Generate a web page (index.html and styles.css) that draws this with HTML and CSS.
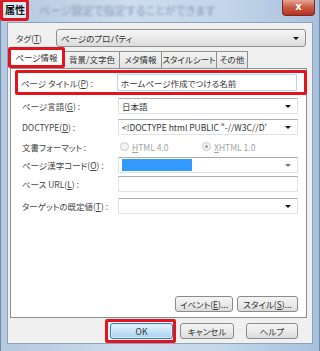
FILE: index.html
```html
<!DOCTYPE html>
<html lang="ja">
<head>
    <meta charset="UTF-8">
    <title>属性</title>
    <link rel="stylesheet" href="styles.css">
</head>
<body>
    <div class="win">
        <!-- title bar -->
        <div class="titlebar">
            <span class="cap">属性</span>
            <span class="glass">ページ設定で指定することができます</span>
            <span class="close">x</span>
        </div>

        <div class="client">
            <div class="tagrow">
                <span class="lbl">タグ(<u>T</u>)</span>
                <div class="combo btncombo"><span>ページのプロパティ</span><i class="arrow"></i></div>
            </div>

            <div class="tabs">
                <span class="tab active">ページ情報</span>
                <span class="tab w55">背景/文字色</span>
                <span class="tab w42">メタ情報</span>
                <span class="tab w55">スタイルシート</span>
                <span class="tab w31">その他</span>
            </div>

            <div class="panel">
                <div class="row mark">
                    <span class="lbl">ページ タイトル(<u>P</u>) :</span>
                    <div class="field edit"><span>ホームページ作成でつける名前</span></div>
                </div>
                <div class="row h21">
                    <span class="lbl">ページ言語(<u>G</u>) :</span>
                    <div class="field combo"><span>日本語</span><i class="arrow"></i></div>
                </div>
                <div class="row h21">
                    <span class="lbl">DOCTYPE(<u>D</u>) :</span>
                    <div class="field combo"><span class="clip">&lt;!DOCTYPE html PUBLIC "-//W3C//D'</span><i class="arrow"></i></div>
                </div>
                <div class="row h19">
                    <span class="lbl">文書フォーマット :</span>
                    <div class="radios">
                        <span class="radio"><i class="dot"></i><u>H</u>TML 4.0</span>
                        <span class="radio on"><i class="dot"></i><u>X</u>HTML 1.0</span>
                    </div>
                </div>
                <div class="row h17">
                    <span class="lbl">ページ漢字コード(<u>O</u>) :</span>
                    <div class="field combo"><span class="sel"></span><i class="arrow grey"></i></div>
                </div>
                <div class="row h22">
                    <span class="lbl">ベース URL(<u>L</u>) :</span>
                    <div class="field edit"></div>
                </div>
                <div class="row h22">
                    <span class="lbl">ターゲットの既定値(<u>T</u>) :</span>
                    <div class="field combo"><span></span><i class="arrow"></i></div>
                </div>

                <div class="panel-btns">
                    <span class="btn w58">イベント(<u>E</u>)...</span>
                    <span class="btn w61">スタイル(<u>S</u>)...</span>
                </div>
            </div>

            <div class="footer">
                <span class="okmark"><span class="btn default w63">OK</span></span>
                <span class="btn w54">キャンセル</span>
                <span class="btn w52">ヘルプ</span>
            </div>
        </div>
    </div>
</body>
</html>
```

FILE: styles.css
```css
/* Windows 7 style property dialog */
* {
    box-sizing: border-box;
}
body {
    margin: 0;
    width: 320px;
    height: 351px;
    overflow: hidden;
    font-family: "Noto Sans CJK JP", "Noto Sans", sans-serif;
    font-size: 8.5px;
    font-feature-settings: "palt";
    color: #444;
    background: #8aa4c2;
}
u {
    text-decoration: underline;
    text-underline-offset: 1px;
}
.win {
    height: 351px;
    display: flex;
    flex-direction: column;
    background: linear-gradient(90deg, #b4c8df, #cddcee 40%, #c3d6ea 70%, #a9c0dc);
    border-left: 1px solid #6f8aa8;
    border-right: 1px solid #6f8aa8;
}
.titlebar {
    height: 22px;
    flex: none;
    display: flex;
    align-items: flex-start;
}
.cap {
    margin-top: -1px;
    margin-left: -1px;
    border: 3px solid #e2151f;
    border-radius: 3px;
    padding: 0 1px 1px 2px;
    font-size: 10px;
    font-weight: bold;
    line-height: 15px;
    color: #111;
    background: #dce8f4;
}
.glass {
    margin: 2px 0 0 10px;
    font-size: 11px;
    color: #4e6a8a;
    opacity: .55;
    filter: blur(1px);
    white-space: nowrap;
}
.close {
    margin-left: auto;
    margin-right: 4px;
    width: 33px;
    height: 16px;
    border: 1px solid #7a2a25;
    border-top: none;
    border-radius: 0 0 4px 4px;
    background: linear-gradient(#e8a493, #c85a45 50%, #b7321f);
    color: #fff;
    font-family: "DejaVu Sans", sans-serif;
    font-size: 10px;
    font-weight: bold;
    text-align: center;
    line-height: 13px;
}
.client {
    margin: 0 6px;
    height: 322px;
    background: #f0f0f0;
    border: 1px solid #8da3bd;
    display: flex;
    flex-direction: column;
}
.tagrow {
    margin-top: 6px;
    height: 18px;
    display: flex;
    align-items: center;
    padding-left: 8px;
}
.tagrow .lbl {
    width: 40px;
}
.combo, .edit {
    position: relative;
    display: flex;
    align-items: center;
    background: #fff;
    border: 1px solid #dfe3e8;
    border-top-color: #abadb3;
    color: #333;
    padding-left: 3px;
    overflow: hidden;
    white-space: nowrap;
}
.btncombo {
    width: 250px;
    height: 18px;
    border: 1px solid #8e8f8f;
    border-radius: 3px;
    background: linear-gradient(#f6f6f6, #e9e9e9 50%, #dcdcdc);
    padding-left: 4px;
}
.arrow {
    position: absolute;
    right: 6px;
    top: 50%;
    margin-top: -1px;
    border-left: 3px solid transparent;
    border-right: 3px solid transparent;
    border-top: 3px solid #111;
}
.arrow.grey {
    border-top-color: #777;
}
.tabs {
    height: 21px;
    display: flex;
    align-items: flex-end;
}
.tab {
    height: 17px;
    border: 1px solid #8e8f8f;
    border-bottom: none;
    border-left: none;
    background: linear-gradient(#f3f3f3, #e3e3e3);
    text-align: center;
    line-height: 15px;
    white-space: nowrap;
    overflow: hidden;
    color: #333;
}
.tab.active {
    width: 57px;
    height: 21px;
    border: 3px solid #e2151f;
    border-radius: 2px;
    background: #fff;
    line-height: 14px;
    position: relative;
    z-index: 1;
}
.w55 { width: 55px; }
.w42 { width: 42px; }
.w31 { width: 31px; }
.panel {
    margin-left: 2px;
    width: 297px;
    height: 250px;
    background: #fff;
    border: 1px solid #8e8f8f;
    display: flex;
    flex-direction: column;
    padding-top: 1px;
}
.row {
    display: flex;
    align-items: center;
    padding-left: 11px;
}
.row .lbl {
    width: 96px;
    flex: none;
    white-space: nowrap;
    color: #444;
}
.row.mark {
    margin-left: 4px;
    width: 292px;
    height: 25px;
    border: 3px solid #e2151f;
    border-radius: 2px;
    padding-left: 3px;
}
.row.mark .field {
    border-color: #b7d5ef;
    height: 17px;
}
.h21 { height: 21px; }
.h19 { height: 19px; }
.h17 { height: 17px; }
.h22 { height: 22px; }
.field {
    width: 180px;
    height: 16px;
}
.sel {
    width: 70px;
    height: 12px;
    background: #3399ff;
}
.radios {
    display: flex;
    padding-left: 2px;
    color: #a3a3a3;
}
.radio {
    display: flex;
    align-items: center;
    width: 82px;
}
.dot {
    width: 9px;
    height: 9px;
    border: 1px solid #c8c8c8;
    border-radius: 50%;
    background: #f4f4f4;
    margin-right: 3px;
    position: relative;
}
.radio.on .dot::after {
    content: "";
    position: absolute;
    left: 2px;
    top: 2px;
    width: 3px;
    height: 3px;
    border-radius: 50%;
    background: #9a9a9a;
}
.panel-btns {
    margin-top: auto;
    margin-bottom: 5px;
    display: flex;
    justify-content: flex-end;
    gap: 4px;
    padding-right: 8px;
}
.btn {
    height: 16px;
    border: 1px solid #8b8b8b;
    border-radius: 3px;
    background: linear-gradient(#f4f4f4, #ebebeb 50%, #dbdbdb);
    text-align: center;
    line-height: 14px;
    color: #333;
    white-space: nowrap;
}
.btn.default {
    border-color: #3c7fb1;
    background: linear-gradient(#e6f3fc, #c7e3f7 50%, #a9d3f1);
    box-shadow: inset 0 0 0 1px #d6ecfb;
}
.w58 { width: 58px; }
.w61 { width: 61px; }
.w63 { width: 63px; }
.w54 { width: 54px; }
.w52 { width: 52px; }
.footer {
    margin-top: 1px;
    height: 24px;
    display: flex;
    align-items: center;
    justify-content: flex-end;
    padding-right: 14px;
}
.okmark {
    display: flex;
    border: 3px solid #e2151f;
    border-radius: 2px;
    padding: 1px 0 1px 2px;
    margin-right: 4px;
}
.footer .w52 {
    margin-left: 12px;
}
```
